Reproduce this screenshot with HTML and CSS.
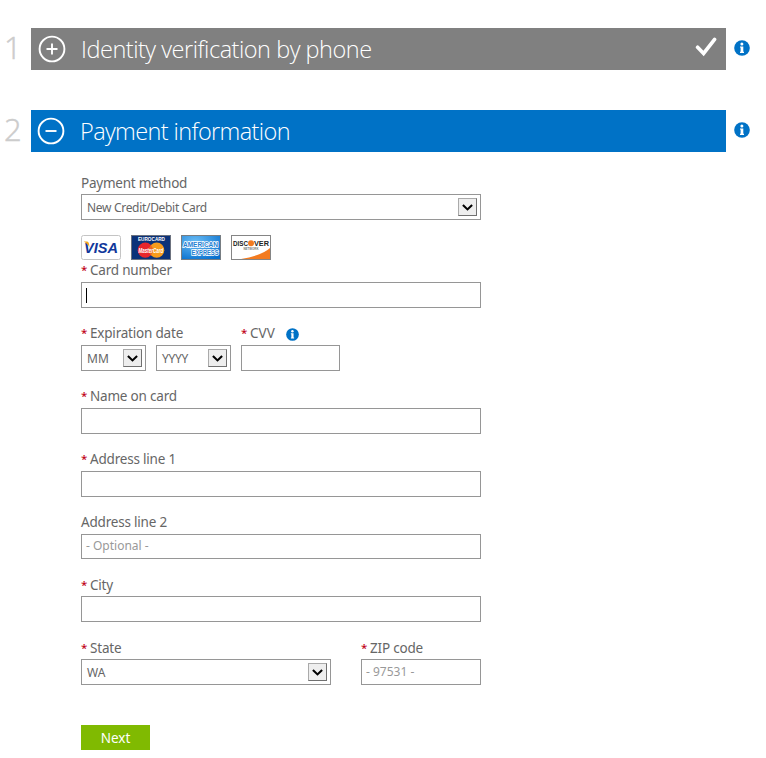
FILE: index.html
```html
<!DOCTYPE html>
<html lang="en">
<head>
<meta charset="utf-8">
<title>Payment information</title>
<link rel="stylesheet" href="styles.css">
</head>
<body>
<svg width="0" height="0" class="defs">
  <symbol id="info" viewBox="0 0 16 16">
    <circle cx="8" cy="8" r="7.8" fill="#0072c6"/>
    <circle cx="7.9" cy="4" r="1.5" fill="#fff"/>
    <path d="M6 6.4H9.3V11.8H10V13H6V11.8H6.6V7.6H6Z" fill="#fff"/>
  </symbol>
  <symbol id="chevron" viewBox="0 0 11 7">
    <path d="M.9 1 5.5 5.4 10.1 1" fill="none" stroke="#000" stroke-width="2.1"/>
  </symbol>
</svg>
<section class="step">
  <span class="num">1</span>
  <header class="bar done">
    <svg class="toggle" viewBox="0 0 28 28"><circle cx="14" cy="14" r="12.4"/><path d="M8.5 14h11M14 8.5v11"/></svg>
    <h2 class="t1">Identity verification by phone</h2>
    <svg class="check" viewBox="0 0 22 20"><path d="M2.6 10.2 8.6 16.4 19.6 2.4"/></svg>
  </header>
  <svg class="info"><use href="#info"/></svg>
</section>
<section class="step second">
  <span class="num">2</span>
  <header class="bar active">
    <svg class="toggle" viewBox="0 0 28 28"><circle cx="14" cy="14" r="12.4"/><path d="M8.5 14h11"/></svg>
    <h2 class="t2">Payment information</h2>
  </header>
  <svg class="info"><use href="#info"/></svg>
</section>
<form class="form">
  <div class="group method">
    <label>Payment method</label>
    <div class="field select"><span class="newcard">New Credit/Debit Card</span><i class="drop"><svg><use href="#chevron"/></svg></i></div>
  </div>
  <div class="cards">
    <svg viewBox="0 0 40 25">
      <rect x=".5" y=".5" width="39" height="24" rx="2" fill="#fff" stroke="#c4c4c4"/>
      <text x="3" y="18" font-size="15.5" font-weight="700" font-style="italic" fill="#10379b" textLength="34" lengthAdjust="spacingAndGlyphs">VISA</text>
      <path d="M2.6 6.5H6.3Q7.6 6.7 8.1 9L8.5 12.8Q7 8.7 2.6 6.5Z" fill="#f5a51c"/>
    </svg>
    <svg viewBox="0 0 40 25">
      <rect x=".5" y=".5" width="39" height="24" fill="#0b3279" stroke="#6c727f"/>
      <text x="7" y="6" font-size="5" font-weight="700" fill="#fff" textLength="27" lengthAdjust="spacingAndGlyphs">EUROCARD</text>
      <circle cx="14.3" cy="15.2" r="7.6" fill="#e8262b"/><circle cx="25.7" cy="15.2" r="7.6" fill="#f89c1c"/>
      <path d="M20 10.2a7.6 7.6 0 0 1 0 10a7.6 7.6 0 0 1 0-10Z" fill="#ef6422"/>
      <text x="7.4" y="17.6" font-size="6.4" font-weight="700" font-style="italic" fill="#fff" textLength="25" lengthAdjust="spacingAndGlyphs">MasterCard</text>
    </svg>
    <svg viewBox="0 0 40 25">
      <defs><radialGradient id="ax" cx=".35" cy=".25" r=".85"><stop offset="0" stop-color="#69bcf5"/><stop offset="1" stop-color="#0870ce"/></radialGradient></defs>
      <rect x=".5" y=".5" width="39" height="24" fill="url(#ax)" stroke="#777d82"/>
      <g font-size="7.2" font-weight="700" fill="#2380d2" stroke="#fff" stroke-width="1.7" paint-order="stroke">
        <text x="2" y="11.8" textLength="35" lengthAdjust="spacingAndGlyphs">AMERICAN</text>
        <text x="10.5" y="19.5" textLength="27" lengthAdjust="spacingAndGlyphs">EXPRESS</text>
      </g>
    </svg>
    <svg viewBox="0 0 40 25">
      <path d="M39 13Q31 20.5 10 24H39Z" fill="#f37b20"/>
      <rect x=".5" y=".5" width="39" height="24" fill="none" stroke="#858585"/>
      <g font-weight="700" fill="#222"><text x="2" y="11" font-size="7.8" textLength="15" lengthAdjust="spacingAndGlyphs">DISC</text>
      <circle cx="20" cy="8.2" r="3" fill="#f37b20"/>
      <text x="23" y="11" font-size="7.8" textLength="15" lengthAdjust="spacingAndGlyphs">VER</text>
      <text x="12.5" y="15.4" font-size="3" fill="#777" textLength="15" lengthAdjust="spacingAndGlyphs">NETWORK</text></g>
    </svg>
  </div>
  <div class="group">
    <label class="up"><b>*</b>Card number</label>
    <div class="field"><span class="caret"></span></div>
  </div>
  <div class="row">
    <div class="group">
      <label class="up"><b>*</b>Expiration date</label>
      <div class="row dates">
        <div class="field select mm"><span>MM</span><i class="drop"><svg><use href="#chevron"/></svg></i></div>
        <div class="field select yyyy"><span class="years">YYYY</span><i class="drop"><svg><use href="#chevron"/></svg></i></div>
      </div>
    </div>
    <div class="group cvv">
      <label class="up"><b>*</b><span class="cvvtext">CVV</span><svg class="small-info"><use href="#info"/></svg></label>
      <div class="field"></div>
    </div>
  </div>
  <div class="group"><label class="up"><b>*</b>Name on card</label><div class="field"></div></div>
  <div class="group"><label class="up"><b>*</b>Address line 1</label><div class="field"></div></div>
  <div class="group"><label class="up">Address line 2</label><div class="field short hint">- Optional -</div></div>
  <div class="group"><label><b>*</b>City</label><div class="field"></div></div>
  <div class="row split">
    <div class="group state"><label><b>*</b>State</label><div class="field select"><span>WA</span><i class="drop"><svg><use href="#chevron"/></svg></i></div></div>
    <div class="group zip"><label><b>*</b>ZIP code</label><div class="field hint">- 97531 -</div></div>
  </div>
  <button type="button" class="next">Next</button>
</form>
</body>
</html>
```
FILE: styles.css
```css
* { box-sizing: border-box; }
body { margin: 0; padding-top: 28px; background: #fff; color: #666; font: 14px/20px "Noto Sans", "Open Sans", sans-serif; }
svg { display: block; }
.defs { position: absolute; }
.step { display: flex; height: 42px; }
.second { margin-top: 40px; }
.num { width: 31px; padding-left: 4px; font: 300 31px/38px "Open Sans", sans-serif; color: #ccc; -webkit-text-stroke: 0.5px #ccc; }
.bar { display: flex; align-items: center; width: 695px; color: #fff; }
.done { background: #808080; padding-left: 7px; }
.active { background: #0072c6; padding-left: 6px; }
.toggle { width: 28px; height: 28px; fill: none; stroke: #fff; stroke-width: 1.9; }
.bar h2 { margin: 0 0 0 15px; font: 300 23.5px/42px "Open Sans", sans-serif; white-space: nowrap; }
.bar .t1 { letter-spacing: -0.48px; }
.bar .t2 { letter-spacing: -0.62px; }
.check { width: 22px; height: 20px; margin: 0 9px 4px auto; fill: none; stroke: #fff; stroke-width: 3.6; stroke-linecap: round; }
.info { width: 16px; height: 16px; margin: 12px 0 0 8px; }
.form { width: 400px; margin: 21px 0 0 81px; }
.group { margin-bottom: 16px; }
.group label { display: flex; height: 21px; font-size: 13.5px; line-height: 20px; letter-spacing: -0.2px; white-space: nowrap; }
.method label { letter-spacing: -0.24px; }
.group label.up { line-height: 18px; }
label b { width: 9px; color: #c00018; font-size: 11.5px; font-weight: 500; }
.field { display: flex; align-items: center; height: 26px; border: 1px solid #969696; padding: 0 3px 0 5px; font-size: 12px; }
.field.select span { padding-top: 2px; }
.field .newcard { letter-spacing: -0.31px; }
.field .years { letter-spacing: -0.3px; }
.field.short { height: 25px; }
.field.hint { color: #999; padding-left: 4px; }
.field.short.hint { padding-bottom: 1px; }
.drop { display: grid; place-items: center; width: 19px; height: 18px; margin-left: auto; background: #eee; border: 1px solid #707070; border-top-color: #aaa; border-left-color: #aaa; }
.drop svg { width: 11px; height: 7px; }
.field .caret { width: 1px; height: 15px; margin-left: -1px; background: #000; }
.method { margin-bottom: 15px; }
.cards { display: flex; gap: 10px; margin-bottom: 1px; font-family: "Liberation Sans", sans-serif; }
.cards svg { width: 40px; height: 25px; }
.row { display: flex; gap: 10px; }
.mm { width: 65px; }
.yyyy { width: 75px; }
.cvv { width: 99px; }
.cvvtext { width: 27px; letter-spacing: 0; }
.small-info { width: 13px; height: 13px; margin: 4px 0 0 9px; }
.split { gap: 30px; }
.state { width: 250px; }
.zip { width: 120px; }
.next { display: block; width: 69px; height: 25px; margin: 24px 0 0; padding: 0; border: 0; background: #80ba01; color: #fff; font: 13.5px/24px "Noto Sans", sans-serif; }
```
